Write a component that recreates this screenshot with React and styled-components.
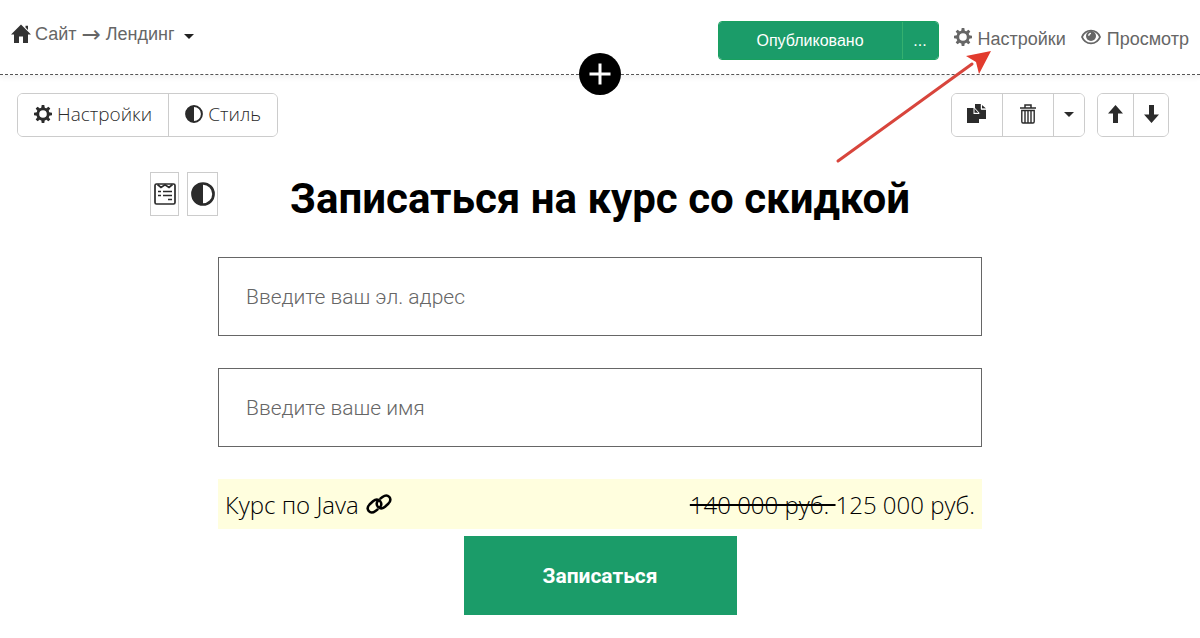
import React from "react";
import styled, { createGlobalStyle } from "styled-components";

const GlobalStyle = createGlobalStyle`
  *, *::before, *::after { box-sizing: border-box; }
  body { margin: 0; background: #fff; color: #333; font-family: "Open Sans", sans-serif; }
  button, input { font-family: inherit; }
`;

const Icon = styled.svg`
  display: block;
  flex: none;
  width: ${(p) => p.$w || 20}px;
  height: ${(p) => p.$h || p.$w || 20}px;
  fill: currentColor;
`;

const Header = styled.header`
  position: relative;
  display: flex;
  justify-content: space-between;
  align-items: flex-start;
  min-height: 75px;
  padding: 21px 11px 0;
  border-bottom: 1px dashed #555;
  box-shadow: 0 3px 5px #f3f3f3;
  font-family: "Liberation Sans", Arial, sans-serif;
  font-size: 18px;
  color: #666;
`;

const Crumbs = styled.nav`
  display: flex;
  align-items: center;
  gap: 5px;
  height: 26px;
  white-space: nowrap;
`;

const Crumb = styled.a`
  display: flex;
  align-items: center;
  gap: 4px;
  color: inherit;
  text-decoration: none;
  svg { color: #333; }
`;

const Arrow = styled.span`
  font-family: "DejaVu Sans", sans-serif;
  font-size: 23px;
  line-height: 24px;
`;

const CaretButton = styled.button`
  padding: 4px 4px 0;
  border: 0;
  background: none;
  color: #222;
`;

const HeaderActions = styled.div`
  display: flex;
  gap: 15px;
`;

const PublishGroup = styled.div`
  display: flex;
  height: 39px;
  border: 1px solid #19a05f;
  border-radius: 4px;
  overflow: hidden;
`;

const PublishButton = styled.button`
  width: ${(p) => (p.$narrow ? 36 : 183)}px;
  padding: 0;
  border: 0;
  border-left: ${(p) => (p.$narrow ? "1px solid #35b06f" : "0")};
  background: #1b9c69;
  color: #fff;
  font-size: 16px;
`;

const HeaderLink = styled.a`
  position: relative;
  display: flex;
  align-items: center;
  gap: 6px;
  height: 36px;
  color: inherit;
  text-decoration: none;
  > svg:first-child { margin-bottom: 4px; }
`;

const Pointer = styled.svg`
  position: absolute;
  z-index: 2;
  top: 28px;
  right: 74px;
  width: 158px;
  height: 116px;
  pointer-events: none;
`;

const AddButton = styled.button`
  position: absolute;
  z-index: 1;
  left: 50%;
  bottom: -21px;
  display: grid;
  place-items: center;
  width: 42px;
  height: 42px;
  margin-left: -21px;
  padding: 0;
  border: 0;
  border-radius: 50%;
  background: #000;
  color: #fff;
`;

const Toolbar = styled.div`
  display: flex;
  justify-content: space-between;
  padding: 18px 31px 0 17px;
`;

const ToolSet = styled.div`
  display: flex;
  gap: 12px;
`;

const ButtonGroup = styled.div`
  display: flex;
  height: 44px;
  border: 1px solid #ccc;
  border-radius: 6px;
  overflow: hidden;
`;

const ToolButton = styled.button`
  display: flex;
  align-items: center;
  justify-content: center;
  gap: 5px;
  min-width: ${(p) => p.$w || 0}px;
  padding: 0 ${(p) => (p.$w ? 0 : 16)}px 2px;
  border: 0;
  background: #fff;
  color: #2b2b2b;
  font-size: 19px;
  font-weight: 350;
  & + & { border-left: 1px solid #ccc; }
`;

const Main = styled.main`
  display: grid;
  grid-template-columns: 1fr minmax(0, 764px) 1fr;
  padding: 35px 0 23px;
`;

const BlockTools = styled.div`
  display: flex;
  gap: 8px;
  justify-self: end;
`;

const BlockTool = styled.button`
  display: grid;
  place-items: center;
  width: ${(p) => p.$w}px;
  height: 44px;
  padding: 0;
  border: 1px solid #ccc;
  background: #fff;
  color: #2b2b2b;
`;

const Form = styled.form`
  display: flex;
  flex-direction: column;
  font-family: Roboto, sans-serif;
`;

const Title = styled.h1`
  margin: 0 0 33px;
  padding-top: 2px;
  text-align: center;
  font-size: 42px;
  line-height: 50px;
  font-weight: 700;
  color: #000;
`;

const Field = styled.input`
  width: 100%;
  height: 79px;
  margin-bottom: 32px;
  padding: 0 27px;
  border: 1px solid #666;
  background: #fff;
  font-size: 21px;
  font-weight: 300;
  color: #333;
  &::placeholder { color: #666; opacity: 1; }
`;

const OfferRow = styled.div`
  display: flex;
  justify-content: space-between;
  align-items: center;
  height: 50px;
  padding: 0 7px;
  background: #fffede;
  font-family: "Open Sans", sans-serif;
  font-size: 24px;
  font-weight: 350;
  color: #000;
`;

const CourseName = styled.span`
  display: flex;
  align-items: center;
  gap: 7px;
`;

const OldPrice = styled.s`
  white-space: pre;
`;

const Submit = styled.button`
  align-self: center;
  width: 273px;
  height: 79px;
  margin-top: 7px;
  border: 0;
  background: #1b9c69;
  color: #fff;
  font-size: 21px;
  font-weight: 700;
`;

const Home = () => (
  <Icon $w={20} viewBox="0 0 20 20">
    <path d="M10 0.500 20 10.500H17V19H12V12.500H8V19H3V10.500H0L10 0.500ZM14.500 1.800H17V6L14.500 3.500Z" />
  </Icon>
);

const Caret = () => (
  <Icon $w={10} $h={5} viewBox="0 0 10 5"><path d="M0 0H10L5 5Z" /></Icon>
);

const Cog = () => (
  <Icon $w={18} viewBox="0 0 18 18">
    <circle cx="9" cy="9" r="5.200" fill="none" stroke="currentColor" strokeWidth="2.800" />
    {[0, 45, 90, 135, 180, 225, 270, 315].map((a) => (
      <path key={a} d="M7.200 3 7.700 0H10.300L10.800 3Z" transform={`rotate(${a} 9 9)`} />
    ))}
  </Icon>
);

const Eye = () => (
  <Icon $w={20} $h={16} viewBox="0 0 20 16">
    <path d="M1 8C4.500 -.5 15.500 -.5 19 8C15.500 16.500 4.500 16.500 1 8Z" fill="none" stroke="currentColor" strokeWidth="1.900" />
    <circle cx="10" cy="7" r="5" />
    <path d="M7.800 6.800Q7.800 4.600 10 4.400" fill="none" stroke="#fff" strokeWidth="1.400" />
  </Icon>
);

const Contrast = ({ size = 18 }) => (
  <Icon $w={size} viewBox="0 0 18 18">
    <circle cx="9" cy="9" r="7.900" fill="none" stroke="currentColor" strokeWidth="2" />
    <path d="M9 1A8 8 0 0 0 9 17Z" />
  </Icon>
);

const Plus = () => (
  <Icon $w={22} viewBox="0 0 22 22"><path d="M9.500 0.500H12.500V9.500H21.500V12.500H12.500V21.500H9.500V12.500H.5V9.500H9.500Z" /></Icon>
);

const Copy = () => (
  <Icon $w={20} viewBox="0 0 20 20">
    <path d="M8 0H14V5.500H19V15H12V9L8 4.500ZM15 1 19 4.500H15Z" />
    <path d="M0 4H6.500V10H12V19H0ZM7.500 4 12 8.800H7.500Z" />
    <path d="M14.300 0V5.200H19.500M7 3.500 12.500 9.400" fill="none" stroke="#fff" strokeWidth="1" />
  </Icon>
);

const Trash = () => (
  <Icon $w={18} $h={20} viewBox="0 0 18 20">
    <path d="M1 4H17M6 4V1H12V4" fill="none" stroke="currentColor" strokeWidth="1.500" />
    <path d="M2.800 6.500H15.200V17.500Q15.200 19 14 19H4Q2.800 19 2.800 17.500ZM6 7V18.500M9 7V18.500M12 7V18.500" fill="none" stroke="currentColor" strokeWidth="1.400" />
  </Icon>
);

const ArrowUp = () => (
  <Icon $w={15} $h={18} viewBox="0 0 15 18"><path d="M7.500 0 15 8.500H10V18H5V8.500H0Z" /></Icon>
);

const ArrowDown = () => (
  <Icon $w={15} $h={18} viewBox="0 0 15 18"><path d="M7.500 18 0 9.500H5V0H10V9.500H15Z" /></Icon>
);

const FormIcon = () => (
  <Icon $w={22} viewBox="0 0 22 22">
    <g fill="none" stroke="currentColor" strokeWidth="1.700">
      <rect x="1" y="1" width="20" height="20" rx="1.500" />
      <path d="M3.500 1.500 7 4.500 11 1.800 15 4.500 18.500 1.500M4 8.500H7M9 8.500H18M4 12.500H7M9 12.500H18M14 16.500H18" />
    </g>
  </Icon>
);

const LinkIcon = () => (
  <Icon $w={26} $h={20} viewBox="0 0 26 20">
    <g fill="none" stroke="currentColor" strokeWidth="2.500" strokeLinecap="round">
      <path d="M11.500 15.500 9.500 17Q5.500 20 2.800 17.200Q.2 14 3.500 10.500L7 7.300Q11 4 14.300 7.400Q16.500 10.500 13.900 13.300" />
      <path d="M14.500 4.500 16.500 3Q20.500 0 23.200 2.800Q25.800 6 22.500 9.500L19 12.700Q15 16 11.700 12.600Q9.500 9.500 12.100 6.700" />
    </g>
  </Icon>
);

export default function App() {
  return (
    <>
      <GlobalStyle />
      <Header>
        <Crumbs aria-label="Навигация">
          <Crumb href="#site"><Home />Сайт</Crumb>
          <Arrow>→</Arrow>
          <Crumb href="#landing">Лендинг</Crumb>
          <CaretButton aria-label="Меню"><Caret /></CaretButton>
        </Crumbs>
        <HeaderActions>
          <PublishGroup>
            <PublishButton>Опубликовано</PublishButton>
            <PublishButton $narrow>...</PublishButton>
          </PublishGroup>
          <HeaderLink href="#settings">
            <Cog />Настройки
            <Pointer viewBox="0 0 158 116">
              <path d="M4 112 138 15" stroke="#d8453c" strokeWidth="3" strokeLinecap="round" />
              <path d="M157 2 145 25 142 13 132 7Z" fill="#e23b2e" />
            </Pointer>
          </HeaderLink>
          <HeaderLink href="#preview"><Eye />Просмотр</HeaderLink>
        </HeaderActions>
        <AddButton aria-label="Добавить блок"><Plus /></AddButton>
      </Header>
      <Toolbar>
        <ButtonGroup>
          <ToolButton><Cog />Настройки</ToolButton>
          <ToolButton><Contrast />Стиль</ToolButton>
        </ButtonGroup>
        <ToolSet>
          <ButtonGroup>
            <ToolButton $w={50} aria-label="Копировать"><Copy /></ToolButton>
            <ToolButton $w={51} aria-label="Удалить"><Trash /></ToolButton>
            <ToolButton $w={31} aria-label="Ещё"><Caret /></ToolButton>
          </ButtonGroup>
          <ButtonGroup>
            <ToolButton $w={35} aria-label="Вверх"><ArrowUp /></ToolButton>
            <ToolButton $w={35} aria-label="Вниз"><ArrowDown /></ToolButton>
          </ButtonGroup>
        </ToolSet>
      </Toolbar>
      <Main>
        <BlockTools>
          <BlockTool $w={29} aria-label="Форма"><FormIcon /></BlockTool>
          <BlockTool $w={31} aria-label="Стиль блока"><Contrast size={24} /></BlockTool>
        </BlockTools>
        <Form onSubmit={(e) => e.preventDefault()}>
          <Title>Записаться на курс со скидкой</Title>
          <Field type="email" aria-label="Эл. адрес" placeholder="Введите ваш эл. адрес" />
          <Field type="text" aria-label="Имя" placeholder="Введите ваше имя" />
          <OfferRow>
            <CourseName>Курс по Java <LinkIcon /></CourseName>
            <span><OldPrice>140 000 руб. </OldPrice>125 000 руб.</span>
          </OfferRow>
          <Submit type="submit">Записаться</Submit>
        </Form>
      </Main>
    </>
  );
}
